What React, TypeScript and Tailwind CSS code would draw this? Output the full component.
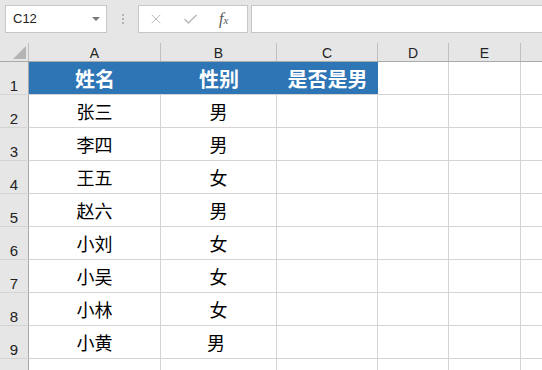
import { X, Check } from "lucide-react";

const cols = [
  { key: "A", w: "w-[132px]" },
  { key: "B", w: "w-[116px]" },
  { key: "C", w: "w-[101px]" },
  { key: "D", w: "w-[71px]" },
  { key: "E", w: "w-[72px]" },
];

const rows = [
  ["张三", "男"],
  ["李四", "男"],
  ["王五", "女"],
  ["赵六", "男"],
  ["小刘", "女"],
  ["小吴", "女"],
  ["小林", "女"],
  ["小黄", "男"],
];

const cjk = "font-['Noto_Sans_CJK_SC','Noto_Sans',sans-serif]";
const latin = "font-['Liberation_Sans','Noto_Sans',sans-serif]";

function RowHead({ n }: { n?: number }) {
  return (
    <div className={`w-[29px] h-[33px] shrink-0 bg-[#e6e6e6] border-r border-r-[#a9a9a9] border-b border-b-[#d4d4d4] flex items-end justify-center pb-[1px] text-[15px] leading-none text-[#222] ${latin}`}>
      {n}
    </div>
  );
}

export default function App() {
  return (
    <div className="w-[542px] h-[370px] overflow-hidden bg-white">
      {/* Formula bar */}
      <div className="h-[43px] bg-[#e6e6e6] flex items-start pt-[5px] pl-[5px]">
        <div className={`w-[102px] h-[28px] bg-white border border-[#c6c6c6] flex items-center justify-between pl-[7px] pr-[6px] text-[13px] text-[#222] ${latin}`}>
          <span>C12</span>
          <span className="w-0 h-0 border-l-[4px] border-r-[4px] border-t-[4px] border-l-transparent border-r-transparent border-t-[#777]" />
        </div>
        <div className="w-[31px] h-[28px] flex flex-col items-center justify-center gap-[2px]">
          <span className="w-[2px] h-[2px] bg-[#b5b5b5]" />
          <span className="w-[2px] h-[2px] bg-[#b5b5b5]" />
          <span className="w-[2px] h-[2px] bg-[#b5b5b5]" />
        </div>
        <div className="w-[110px] h-[28px] bg-white border border-[#c6c6c6] flex items-center pl-[9px]">
          <X className="w-[16px] h-[16px] text-[#b8b8b8]" strokeWidth={1.4} />
          <Check className="w-[17px] h-[17px] text-[#b8b8b8] ml-[18px]" strokeWidth={2} />
          <span className="ml-[20px] text-[16px] italic text-[#555] font-['Liberation_Serif',serif]">
            f<span className="text-[11px]">x</span>
          </span>
        </div>
        <div className="ml-[3px] flex-1 h-[28px] bg-white border border-r-0 border-[#c6c6c6]" />
      </div>

      {/* Column headers */}
      <div className="flex h-[19px] bg-[#e6e6e6] border-b border-b-[#a9a9a9]">
        <div className="w-[29px] shrink-0 border-r border-r-[#c0c0c0] relative">
          <span className="absolute right-[2px] bottom-[2px] w-0 h-0 [border-right:13px_solid_#b4b4b4] [border-top:13px_solid_transparent]" />
        </div>
        {cols.map((c) => (
          <div key={c.key} className={`${c.w} shrink-0 border-r border-r-[#c0c0c0] flex items-end justify-center pb-[1px] text-[14px] leading-none text-[#222] ${latin}`}>
            {c.key}
          </div>
        ))}
        <div className="flex-1" />
      </div>

      {/* Row 1 header */}
      <div className="flex h-[33px]">
        <RowHead n={1} />
        <div className={`w-[349px] shrink-0 flex bg-[#2e75b6] border-b border-b-[#d4d4d4] text-white font-bold text-[20px] ${cjk}`}>
          <div className="w-[132px] flex items-center justify-center pt-[1px]">姓名</div>
          <div className="w-[116px] flex items-center justify-center pt-[1px]">性别</div>
          <div className="w-[101px] flex items-center justify-center pt-[1px]">是否是男</div>
        </div>
        <div className="w-[71px] shrink-0 border-r border-b border-[#d4d4d4]" />
        <div className="w-[72px] shrink-0 border-r border-b border-[#d4d4d4]" />
        <div className="flex-1 border-b border-[#d4d4d4]" />
      </div>

      {rows.map((r, i) => (
        <div key={i} className="flex h-[33px]">
          <RowHead n={i + 2} />
          <div className={`w-[132px] shrink-0 border-r border-b border-[#d4d4d4] flex items-center justify-center pt-[1px] text-[18px] text-black ${cjk}`}>
            {r[0]}
          </div>
          <div className={`w-[116px] shrink-0 border-r border-b border-[#d4d4d4] flex items-center justify-center pt-[1px] text-[18px] text-black ${cjk} ${i === 7 ? "pr-[5px]" : ""}`}>
            {r[1]}
          </div>
          <div className="w-[101px] shrink-0 border-r border-b border-[#d4d4d4]" />
          <div className="w-[71px] shrink-0 border-r border-b border-[#d4d4d4]" />
          <div className="w-[72px] shrink-0 border-r border-b border-[#d4d4d4]" />
          <div className="flex-1 border-b border-[#d4d4d4]" />
        </div>
      ))}

      {/* Row 10, cut off by the window */}
      <div className="flex h-[33px]">
        <RowHead />
        <div className="w-[132px] shrink-0 border-r border-[#d4d4d4]" />
        <div className="w-[116px] shrink-0 border-r border-[#d4d4d4]" />
        <div className="w-[101px] shrink-0 border-r border-[#d4d4d4]" />
        <div className="w-[71px] shrink-0 border-r border-[#d4d4d4]" />
        <div className="w-[72px] shrink-0 border-r border-[#d4d4d4]" />
      </div>
    </div>
  );
}
